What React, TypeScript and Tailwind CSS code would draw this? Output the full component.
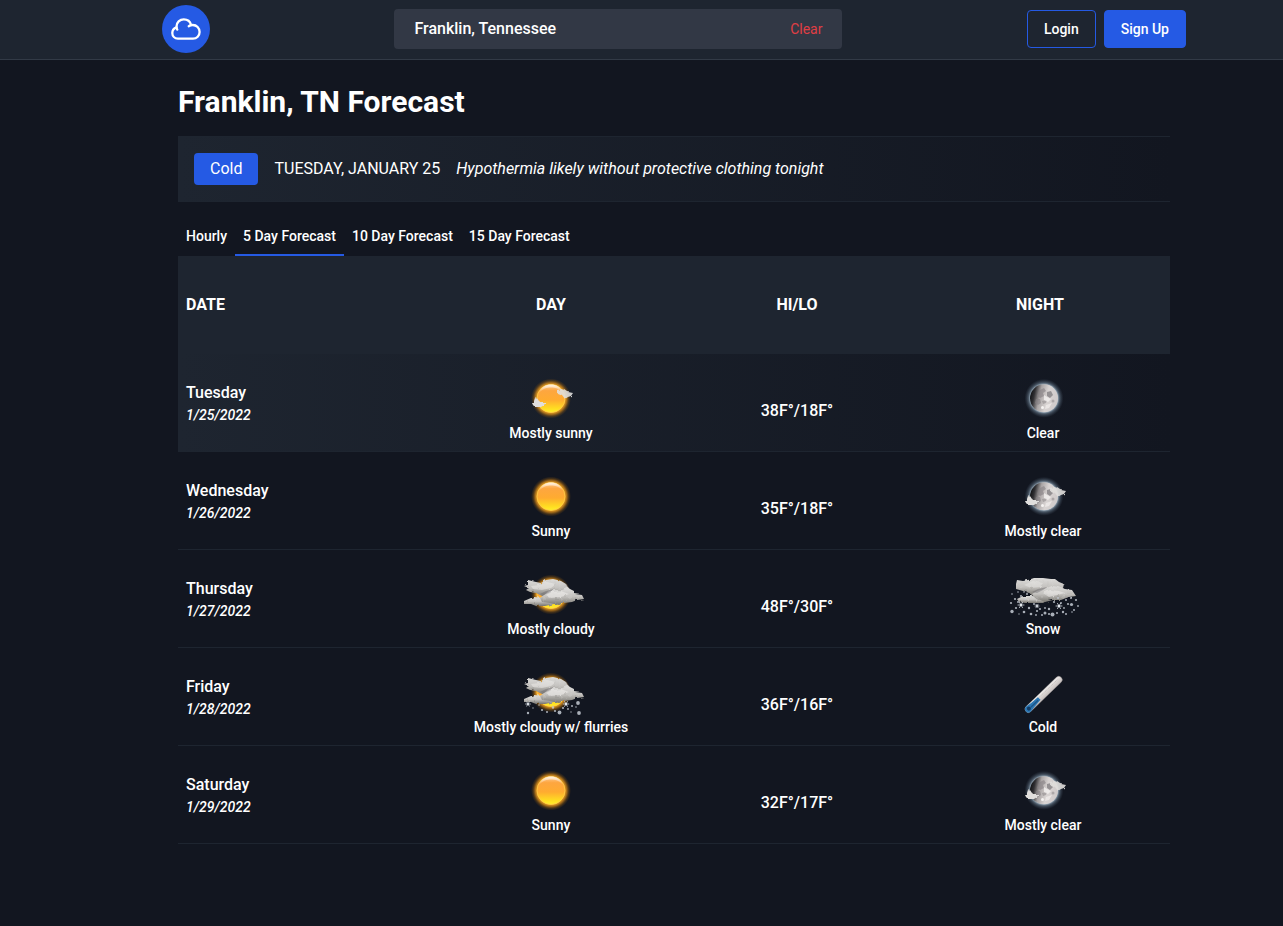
import React, { useState } from "react";

type IconName =
  | "sunny"
  | "mostlySunny"
  | "mostlyCloudy"
  | "flurries"
  | "clear"
  | "mostlyClear"
  | "snow"
  | "cold";

type Forecast = {
  day: string;
  date: string;
  dayIcon: IconName;
  dayText: string;
  temps: string;
  nightIcon: IconName;
  nightText: string;
};

const forecasts: Forecast[] = [
  { day: "Tuesday", date: "1/25/2022", dayIcon: "mostlySunny", dayText: "Mostly sunny", temps: "38F°/18F°", nightIcon: "clear", nightText: "Clear" },
  { day: "Wednesday", date: "1/26/2022", dayIcon: "sunny", dayText: "Sunny", temps: "35F°/18F°", nightIcon: "mostlyClear", nightText: "Mostly clear" },
  { day: "Thursday", date: "1/27/2022", dayIcon: "mostlyCloudy", dayText: "Mostly cloudy", temps: "48F°/30F°", nightIcon: "snow", nightText: "Snow" },
  { day: "Friday", date: "1/28/2022", dayIcon: "flurries", dayText: "Mostly cloudy w/ flurries", temps: "36F°/16F°", nightIcon: "cold", nightText: "Cold" },
  { day: "Saturday", date: "1/29/2022", dayIcon: "sunny", dayText: "Sunny", temps: "32F°/17F°", nightIcon: "mostlyClear", nightText: "Mostly clear" },
];

const tabs = ["Hourly", "5 Day Forecast", "10 Day Forecast", "15 Day Forecast"];

/* Gradients and filters shared by every weather drawing. */
function IconDefs() {
  return (
    <svg className="absolute h-0 w-0" aria-hidden="true">
      <defs>
        <radialGradient id="sun-glow">
          <stop offset="0.66" stopColor="#ffb52a" stopOpacity="1" />
          <stop offset="0.78" stopColor="#f09a18" stopOpacity="0.7" />
          <stop offset="0.9" stopColor="#c87808" stopOpacity="0.25" />
          <stop offset="1" stopColor="#b86a00" stopOpacity="0" />
        </radialGradient>
        <linearGradient id="sun-disc" x1="0" y1="0" x2="0" y2="1">
          <stop offset="0" stopColor="#ffcf9a" />
          <stop offset="0.22" stopColor="#fda640" />
          <stop offset="0.55" stopColor="#ffab30" />
          <stop offset="0.85" stopColor="#ffdc22" />
          <stop offset="1" stopColor="#fff02a" />
        </linearGradient>
        <linearGradient id="sun-shine" x1="0" y1="0" x2="0" y2="1">
          <stop offset="0" stopColor="#fff" stopOpacity="0.75" />
          <stop offset="1" stopColor="#fff" stopOpacity="0" />
        </linearGradient>
        <radialGradient id="moon-glow">
          <stop offset="0.68" stopColor="#c0d2df" stopOpacity="1" />
          <stop offset="0.8" stopColor="#7f95a8" stopOpacity="0.5" />
          <stop offset="1" stopColor="#4a5a6c" stopOpacity="0" />
        </radialGradient>
        <linearGradient id="moon-disc" x1="0" y1="0.4" x2="1" y2="0.6">
          <stop offset="0" stopColor="#101114" />
          <stop offset="0.14" stopColor="#302f32" />
          <stop offset="0.34" stopColor="#aaa5a5" />
          <stop offset="0.6" stopColor="#d8d3d2" />
          <stop offset="1" stopColor="#cfcaca" />
        </linearGradient>
        <linearGradient id="cloud-fill" x1="0" y1="0" x2="0" y2="1">
          <stop offset="0" stopColor="#dddcda" />
          <stop offset="0.5" stopColor="#c4c2bf" />
          <stop offset="1" stopColor="#77756f" />
        </linearGradient>
        <linearGradient id="tube" x1="0" y1="0" x2="0" y2="1">
          <stop offset="0" stopColor="#f2f0ee" />
          <stop offset="0.5" stopColor="#d9d4d2" />
          <stop offset="1" stopColor="#c3bcbb" />
        </linearGradient>
        <filter id="ragged" x="-20%" y="-20%" width="140%" height="140%">
          <feTurbulence type="fractalNoise" baseFrequency="0.18" numOctaves="2" seed="4" result="n" />
          <feDisplacementMap in="SourceGraphic" in2="n" scale="3" />
          <feGaussianBlur stdDeviation="0.4" />
        </filter>
        <filter id="soft" x="-20%" y="-20%" width="140%" height="140%">
          <feGaussianBlur stdDeviation="0.7" />
        </filter>
      </defs>
    </svg>
  );
}

function Sun() {
  return (
    <g>
      <circle cx="38" cy="20.500" r="20" fill="url(#sun-glow)" />
      <circle cx="38" cy="20.500" r="14" fill="url(#sun-disc)" stroke="#ffcb4a" strokeWidth="0.8" />
      <path d="M26 15C28 9 33 6.6 38 6.6S48 9 50 15C46 10.500 42 9.500 38 9.500S30 10.500 26 15Z" fill="url(#sun-shine)" />
    </g>
  );
}

function Moon() {
  return (
    <g>
      <circle cx="38" cy="20.300" r="19.500" fill="url(#moon-glow)" />
      <circle cx="38" cy="20.300" r="14" fill="url(#moon-disc)" />
      <g filter="url(#soft)" fill="#858184">
        <path d="M34 12l4-2 2 3-3 2 1 3-4 2-3-2 1-3Z" opacity="0.6" />
        <path d="M41 14l4-1 2 4-3 3-3-2Z" opacity="0.8" />
        <path d="M30 21l4 0 1 4-3 2-3-2Z" opacity="0.6" />
        <path d="M36 23l5-1-1 3-3 1Z" opacity="0.5" />
        <circle cx="47" cy="23" r="1.500" opacity="0.5" />
        <circle cx="36.500" cy="29.500" r="1.500" fill="#f6f3f2" />
        <path d="M38 17l3 2 4 2-3 3-4-2Z" fill="#f3f0ef" opacity="0.8" />
        <path d="M40 27l6-2-3 5-4 1Z" fill="#efebea" opacity="0.8" />
      </g>
    </g>
  );
}

function Wisps() {
  return (
    <g filter="url(#ragged)" fill="#e0dedc">
      <path d="M19 25l2-2 1-3 3 1 2 3 6 0-2 3-3 2-6 0-2-2Z" />
      <path d="M44 12l4-1 4 1 3 2 5 1-2 3-3 1-3 2-3-4-5-2Z" opacity="0.9" />
    </g>
  );
}

function Clouds() {
  return (
    <g filter="url(#ragged)">
      <path d="M11 12l4-1 0-5 8 2 5 1 5-3 7-1 8 2 5 3 5 7-5 4-12 2-12-1-6-3-6-1-4-2 3-2Z" fill="url(#cloud-fill)" />
      <path d="M11 27l7-3 3-1 9 1 8 2 6 1-3 3-9 2-9 0-5-2-7 0Z" fill="url(#cloud-fill)" />
      <path d="M27 24l4-3 5-4 6-1 7 0 6-2 6 3 1 3 7 1 2 4-7 1-5 2-8 1-5 2-9-2-8-1Z" fill="url(#cloud-fill)" />
      <path d="M18 12l8-1 8-3 9 2-5 4-9 2-9-1Z" fill="#f3f2f0" opacity="0.45" />
      <path d="M33 21l6-3 9-1 8 3-8 3-10 1Z" fill="#f5f4f2" opacity="0.5" />
      <path d="M27 20l6-3 8-2-4 3-6 3Z" fill="#66646a" opacity="0.4" />
    </g>
  );
}

function Flake({ x, y, r }: { x: number; y: number; r: number }) {
  return (
    <g transform={`translate(${x} ${y})`} stroke="#d5dbe2" strokeWidth="0.8" strokeLinecap="round">
      <path d={`M${-r} 0H${r}M${-r / 2} ${-r * 0.87}L${r / 2} ${r * 0.87}M${r / 2} ${-r * 0.87}L${-r / 2} ${r * 0.87}`} />
      <circle r={r * 0.42} fill="#e3e8ee" stroke="none" />
    </g>
  );
}

const flurryDots = [
  [15, 41, 1.2], [20, 36, 0.7], [26, 33, 0.8], [29, 38, 1.1], [34, 40, 1], [40, 35.5, 1.2], [42, 39, 1.1],
  [46.5, 40.5, 1.9], [50, 36, 1.1], [55, 37, 0.9], [59, 34, 1], [63, 35, 0.8], [65, 31, 1.9], [66, 41, 1.9], [58, 40, 0.7],
];

const snowDots = [
  [6, 20, 0.8], [9, 25, 1.1], [5, 29, 1.1], [6, 37.5, 1.7], [12, 28, 1], [10, 34, 1.1], [12, 18, 0.8], [15, 22, 1.1],
  [18, 18, 0.8], [21, 20, 1], [19, 25, 0.8], [18, 38, 1.3], [23, 34, 1.2], [25, 40, 1.3], [28, 30, 1], [31, 37, 1.1],
  [30, 41, 0.9], [34, 35, 1], [36, 41, 1], [39, 34, 0.9], [39, 39, 1.5], [43, 35, 1.2], [43, 40, 1.1], [46.5, 40.5, 2],
  [48, 28, 1.1], [51, 39, 1], [52, 24, 1], [55, 29, 1], [57, 38, 1.2], [58, 34, 0.9], [60, 40, 1], [60, 26, 1],
  [62, 30, 1.1], [65, 24, 1], [65.5, 30.5, 1.6], [68, 36, 1], [70, 26, 1.1], [72, 32, 0.9], [66, 38, 0.8], [13, 40, 0.7],
];

function Dots({ items }: { items: number[][] }) {
  return (
    <g fill="#c4cad3" opacity="0.85">
      {items.map(([x, y, r]) => (
        <circle key={`${x}-${y}`} cx={x} cy={y} r={r} />
      ))}
    </g>
  );
}

function SnowCloud() {
  return (
    <g>
      <g filter="url(#ragged)">
        <path d="M10 10l1-4 6 1 5-1 6-2 9 0 8 1 4 0 4 3 5 2-1 4 3 3-8 3-13 2-12 0-4-3-6-2-7-2Z" fill="url(#cloud-fill)" />
        <path d="M11 25l6-3 9 0 9 1 7 3-5 3-9 0-9 0-6-1Z" fill="url(#cloud-fill)" />
        <path d="M26 20l5-3 7-2 8-3 7 1 6 2 7 1 4 6-7 1-8 3-8 0-8 2-10-4Z" fill="url(#cloud-fill)" />
        <path d="M18 11l9-4 10 2-3 4-9 1Z" fill="#f0efed" opacity="0.4" />
        <path d="M37 19l7-3 9 1 6 2-8 2-8 2Z" fill="#f3f2f0" opacity="0.5" />
        <path d="M26 18l6-3 9-2-4 3-6 3Z" fill="#66646a" opacity="0.4" />
      </g>
      <Dots items={snowDots} />
      <Flake x={15} y={31} r={3} />
      <Flake x={53} y={32} r={3} />
      <Flake x={31} y={32} r={2} />
    </g>
  );
}

function Thermometer() {
  return (
    <g transform="translate(22.500 37) rotate(-44)">
      <rect x="-3.500" y="-3.400" width="49" height="6.800" rx="3.400" fill="url(#tube)" stroke="#8d8988" strokeWidth="0.4" />
      <path d="M4-1H42" stroke="#b9b2b1" strokeWidth="0.8" strokeDasharray="1 1" />
      <path d="M-3.500 0A3.400 3.400 0 0 1 0-3.400L6-2.500 15-2V1.800L6 2.600 0 3.400A3.400 3.400 0 0 1-3.500 0Z" fill="#2d78b4" />
      <circle cx="0.500" cy="0" r="2" fill="#123c66" />
      <path d="M3 0.300H13" stroke="#1c5689" strokeWidth="1.400" />
    </g>
  );
}

function WeatherIcon({ name, label }: { name: IconName; label: string }) {
  return (
    <svg viewBox="0 0 75 45" width="75" height="45" role="img" aria-label={label}>
      {(name === "sunny" || name === "mostlySunny" || name === "mostlyCloudy" || name === "flurries") && <Sun />}
      {(name === "clear" || name === "mostlyClear") && <Moon />}
      {(name === "mostlySunny" || name === "mostlyClear") && <Wisps />}
      {(name === "mostlyCloudy" || name === "flurries") && <Clouds />}
      {name === "flurries" && (
        <>
          <Dots items={flurryDots} />
          <Flake x={15} y={32} r={2.4} />
          <Flake x={53} y={32} r={2.8} />
        </>
      )}
      {name === "snow" && <SnowCloud />}
      {name === "cold" && <Thermometer />}
    </svg>
  );
}

function Header() {
  const [query, setQuery] = useState("Franklin, Tennessee");
  return (
    <header className="border-b border-[#323a46] bg-[#1e2530] pl-[65px]">
      <div className="mx-auto flex max-w-5xl items-center justify-between pt-[5px] pb-1.5">
        <a href="#home" aria-label="Home" className="flex size-12 items-center justify-center rounded-full bg-[#255ae4] text-white">
          <svg viewBox="0 0 30 22" width="30" height="22" fill="none" stroke="currentColor" strokeWidth="2.3" strokeLinecap="round" strokeLinejoin="round" aria-hidden="true">
            <path d="M6.300 11.600C5.700 10.700 5.500 9.600 5.500 8.500C5.500 4.500 8.800 1.300 12.800 1.300C16.300 1.300 19.200 3.600 20 6.800" />
            <path d="M5.500 9.300C3 10.200 1.300 12.300 1.300 15C1.300 18.200 3.700 20.600 6.900 20.600H22C25.800 20.600 28.600 17.700 28.600 14C28.600 10.200 25.600 7 21.800 7C20.300 7 18.900 7.400 17.700 8.200" />
          </svg>
        </a>
        <div className="flex h-10 w-full max-w-md items-center rounded bg-[#323845] px-5">
          <input
            type="text"
            aria-label="Search location"
            value={query}
            onChange={(e) => setQuery(e.target.value)}
            className="min-w-0 flex-1 bg-transparent font-medium text-white outline-none"
          />
          <button type="button" onClick={() => setQuery("")} className="text-sm text-[#e03e44]">
            Clear
          </button>
        </div>
        <div className="flex gap-2 text-sm font-medium text-white">
          <button type="button" className="rounded border border-[#255ae4] px-4 py-2">Login</button>
          <button type="button" className="rounded border border-[#255ae4] bg-[#255ae4] px-4 py-2">Sign Up</button>
        </div>
      </div>
    </header>
  );
}

export default function App() {
  const [active, setActive] = useState("5 Day Forecast");
  return (
    <div className="min-h-screen bg-[#121620] font-['Roboto',sans-serif] text-white">
      <IconDefs />
      <Header />
      <main className="pl-[65px]">
        <div className="mx-auto max-w-5xl px-4 pt-6 pb-20">
          <h1 className="text-3xl font-bold">Franklin, TN Forecast</h1>
          <section className="mt-4 flex items-center gap-4 border-y border-[#1e2530] bg-linear-to-r from-[#1e2530] to-[#121620] p-4">
            <span className="rounded bg-[#255ae4] px-4 py-1">Cold</span>
            <span className="uppercase">Tuesday, January 25</span>
            <em>Hypothermia likely without protective clothing tonight</em>
          </section>
          <nav className="mt-4 flex text-sm font-medium" aria-label="Forecast range">
            {tabs.map((tab) => (
              <button
                key={tab}
                type="button"
                onClick={() => setActive(tab)}
                className={
                  tab === active
                    ? "border-b-2 border-[#255ae4] px-2 pt-2 pb-2"
                    : "border-b-2 border-transparent px-2 pt-2 pb-2"
                }
              >
                {tab}
              </button>
            ))}
          </nav>
          <table className="w-full table-fixed">
            <colgroup>
              <col className="w-[25.2%]" />
              <col className="w-[24.8%]" />
              <col className="w-[24.8%]" />
              <col className="w-[25.2%]" />
            </colgroup>
            <thead>
              <tr className="h-[98px] bg-[#1e2530] uppercase">
                <th scope="col" className="px-2 text-left font-bold">Date</th>
                <th scope="col" className="font-bold">Day</th>
                <th scope="col" className="font-bold">Hi/Lo</th>
                <th scope="col" className="pr-2.5 font-bold">Night</th>
              </tr>
            </thead>
            <tbody>
              {forecasts.map((f) => (
                <tr
                  key={f.date}
                  className="border-b border-[#1e2530] font-medium first:bg-linear-to-r first:from-[#1e2530] first:to-[#121620]"
                >
                  <td className="px-2">
                    <div>{f.day}</div>
                    <div className="text-sm italic">{f.date}</div>
                  </td>
                  <td className="pt-6 pb-2 text-sm">
                    <div className="flex flex-col items-center">
                      <WeatherIcon name={f.dayIcon} label={f.dayText} />
                      <span>{f.dayText}</span>
                    </div>
                  </td>
                  <td className="pt-6 pb-2 text-center">{f.temps}</td>
                  <td className="pt-6 pr-1 pb-2 text-sm">
                    <div className="flex flex-col items-center">
                      <WeatherIcon name={f.nightIcon} label={f.nightText} />
                      <span>{f.nightText}</span>
                    </div>
                  </td>
                </tr>
              ))}
            </tbody>
          </table>
        </div>
      </main>
    </div>
  );
}
